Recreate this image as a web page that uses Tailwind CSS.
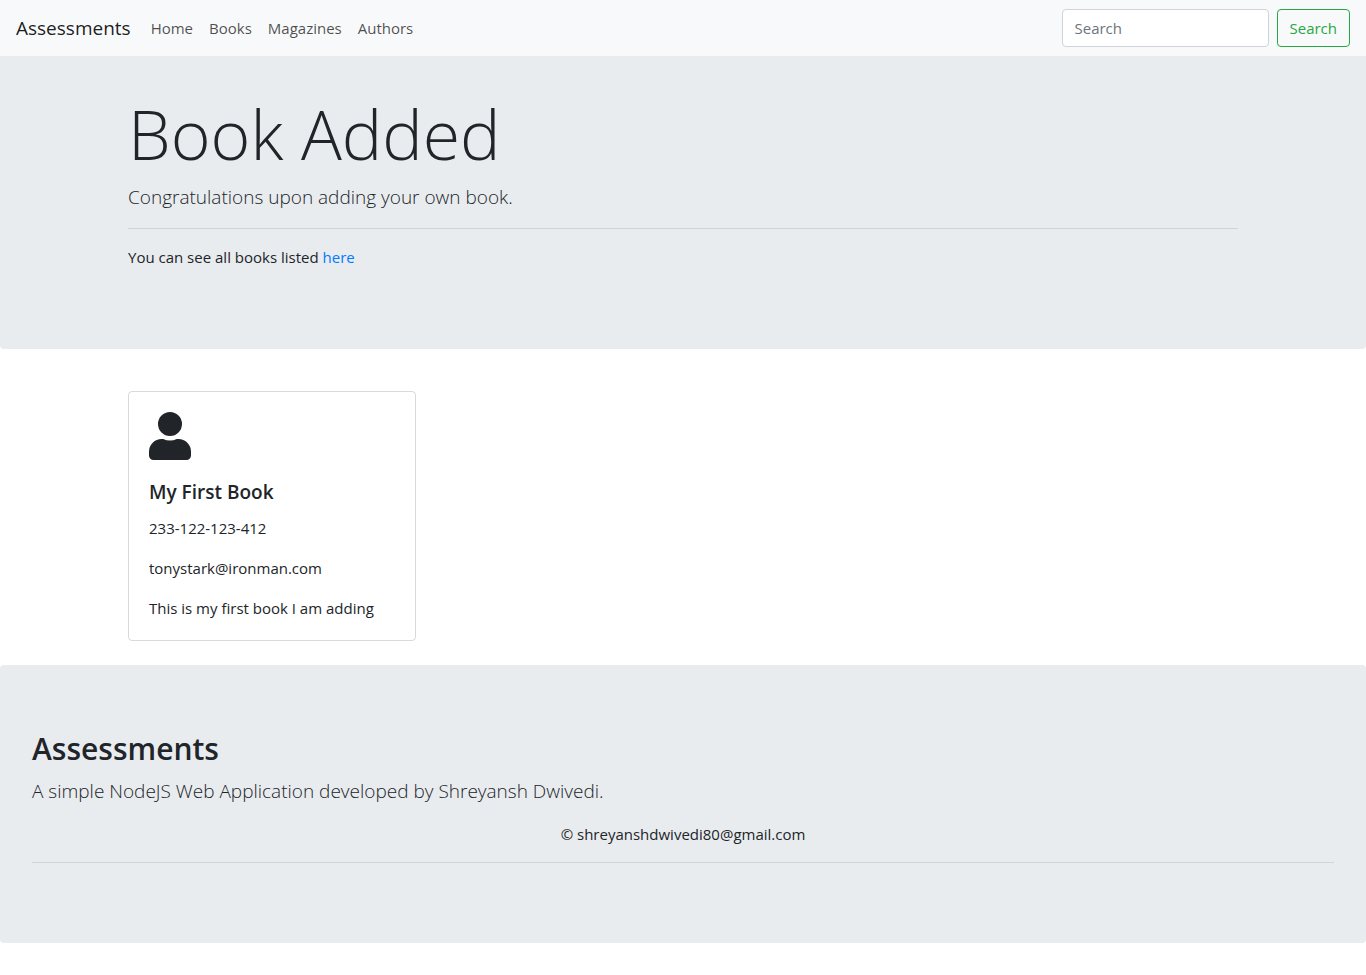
<!DOCTYPE html>
<html lang="en">
<head>
<meta charset="utf-8">
<meta name="viewport" content="width=device-width, initial-scale=1">
<title>Assessments</title>
<script src="https://cdn.jsdelivr.net/npm/@tailwindcss/browser@4"></script>
</head>
<body class="bg-white text-[#212529] text-[15px] leading-6 font-['Segoe_UI','Open_Sans','Noto_Sans',sans-serif]">
<nav class="flex items-center bg-[#f8f9fa] px-4 h-14">
  <a href="#" class="mr-3 text-[19px] leading-8 text-black/90">Assessments</a>
  <div class="flex grow text-black/70">
    <a href="#" class="p-2">Home</a>
    <a href="#" class="p-2">Books</a>
    <a href="#" class="p-2">Magazines</a>
    <a href="#" class="p-2">Authors</a>
  </div>
  <form class="flex gap-2">
    <input type="search" aria-label="Search" placeholder="Search" class="w-[207px] h-[38px] rounded border border-[#ced4da] bg-white px-3 placeholder:text-[#6c757d]">
    <button type="button" class="h-[38px] rounded border border-[#28a745] px-3 text-[#28a745]">Search</button>
  </form>
</nav>
<header class="bg-[#e9ecef] rounded-b px-32 pt-[42px] pb-20">
  <h1 class="text-[68px] leading-[72px] font-light">Book Added</h1>
  <p class="mt-[13px] text-[19px] leading-[29px] font-light">Congratulations upon adding your own book.</p>
  <hr class="my-4 border-black/10">
  <p>You can see all books listed <a href="#" class="text-[#007bff]">here</a></p>
</header>
<main class="px-32 pt-[42px] pb-6">
  <article class="w-72 rounded border border-black/15 p-5">
    <svg class="h-12 w-[42px]" viewBox="0 0 448 512" fill="currentColor" aria-hidden="true"><path d="M224 256a128 128 0 1 0 0-256 128 128 0 0 0 0 256zm89.600 32h-16.700a174 174 0 0 1-145.800 0h-16.700A134.400 134.400 0 0 0 0 422.400V464a48 48 0 0 0 48 48h352a48 48 0 0 0 48-48v-41.600A134.400 134.400 0 0 0 313.600 288z"/></svg>
    <h2 class="mt-5 mb-3 text-[19px] leading-6 font-semibold">My First Book</h2>
    <p class="mb-4">233-122-123-412</p>
    <p class="mb-4">tonystark@ironman.com</p>
    <p>This is my first book I am adding</p>
  </article>
</main>
<footer class="bg-[#e9ecef] rounded px-8 pt-16 pb-20">
  <h2 class="mb-2 text-[30px] leading-10 font-semibold">Assessments</h2>
  <p class="mb-4 text-[19px] leading-[29px] font-light">A simple NodeJS Web Application developed by Shreyansh Dwivedi.</p>
  <p class="text-center">© shreyanshdwivedi80@gmail.com</p>
  <hr class="mt-4 border-black/10">
</footer>
</body>
</html>
